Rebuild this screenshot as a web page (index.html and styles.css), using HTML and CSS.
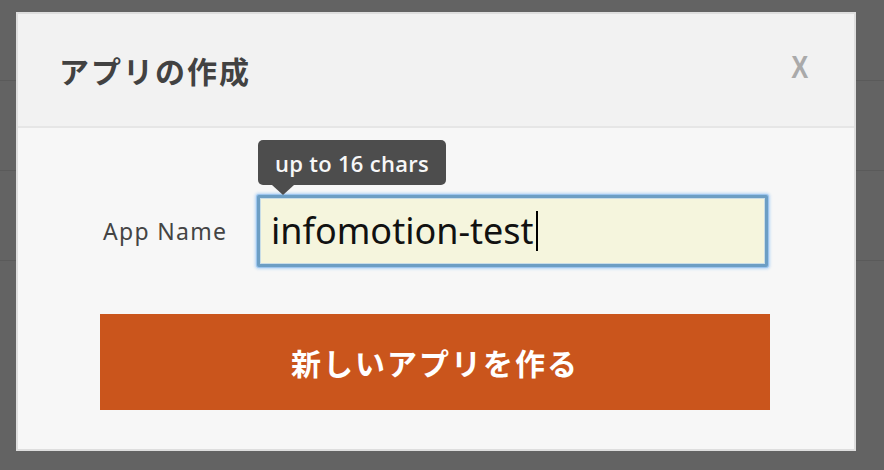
FILE: index.html
```html
<!DOCTYPE html>
<html lang="ja">
<head>
<meta charset="utf-8">
<title>アプリの作成</title>
<link rel="stylesheet" href="styles.css">
</head>
<body>
<div class="page">
  <div class="page-row first"></div>
  <div class="page-row"></div>
  <div class="page-row"></div>
</div>
<div class="modal">
  <div class="modal-header">
    <h1 class="modal-title">アプリの作成</h1>
    <span class="modal-close">X</span>
  </div>
  <div class="modal-body">
    <div class="form-row">
      <label class="form-label">App Name</label>
      <div class="field">
        <div class="tooltip">up to 16 chars</div>
        <div class="input"><span class="input-text">infomotion-test</span><span class="caret"></span></div>
      </div>
    </div>
    <button class="create-btn">新しいアプリを作る</button>
  </div>
</div>
</body>
</html>
```
FILE: styles.css
```css
html, body {
  margin: 0;
  padding: 0;
}
body {
  width: 884px;
  height: 470px;
  overflow: hidden;
  background: #636363;
  font-family: "Noto Sans", "Noto Sans CJK JP", sans-serif;
}
.page-row {
  height: 89px;
  border-bottom: 1px solid #5a5a5a;
}
.page-row.first {
  height: 80px;
}
.modal {
  position: fixed;
  left: 16px;
  top: 12px;
  width: 840px;
  height: 439px;
  box-sizing: border-box;
  border: 2px solid #dedede;
  background: #f7f7f7;
  display: flex;
  flex-direction: column;
}
.modal-header {
  height: 112px;
  background: #f2f2f2;
  border-bottom: 2px solid #e6e6e6;
  display: flex;
  align-items: center;
  justify-content: space-between;
  padding: 0 44px 0 41px;
}
.modal-title {
  margin: 0;
  font-family: "Noto Sans CJK JP", sans-serif;
  font-weight: 700;
  font-size: 30px;
  letter-spacing: 2px;
  color: #424242;
  line-height: 1;
}
.modal-close {
  font-family: "Liberation Sans", sans-serif;
  font-weight: 700;
  font-size: 32px;
  color: #aaaaaa;
  line-height: 1;
  transform: translateY(-3px) scaleX(0.8);
}
.modal-body {
  flex: 1;
  padding: 67px 84px 0 82px;
}
.form-row {
  display: flex;
  align-items: center;
}
.form-label {
  flex: 0 0 154px;
  padding-left: 3px;
  font-size: 23px;
  letter-spacing: 1.3px;
  color: #444444;
}
.field {
  position: relative;
  width: 511px;
}
.tooltip {
  position: absolute;
  left: 1px;
  top: -55px;
  width: 188px;
  height: 45px;
  box-sizing: border-box;
  border-radius: 5px;
  background: #4d4d4d;
  color: #f7f7f7;
  font-family: "Open Sans", "Noto Sans", sans-serif;
  font-weight: 600;
  font-size: 22px;
  letter-spacing: 0.3px;
  display: flex;
  align-items: center;
  justify-content: center;
}
.tooltip::after {
  content: "";
  position: absolute;
  left: 14px;
  top: 45px;
  border-left: 11px solid transparent;
  border-right: 11px solid transparent;
  border-top: 10px solid #4d4d4d;
}
.input {
  height: 72px;
  box-sizing: border-box;
  border: 3px solid #6c9ec4;
  border-radius: 2px;
  background: #f5f5dd;
  box-shadow: 0 0 0 1px #9cc5ee, 0 0 3px 2px #b6d6f5, inset 0 0 0 1px #c9dde6;
  display: flex;
  align-items: center;
  padding-left: 11px;
}
.input-text {
  font-size: 36px;
  color: #111111;
  line-height: 1;
}
.caret {
  display: inline-block;
  width: 2px;
  height: 40px;
  margin-left: 2px;
  background: #000000;
}
.create-btn {
  display: block;
  margin-top: 47px;
  width: 670px;
  height: 96px;
  border: none;
  padding: 0;
  background: #ca551c;
  color: #ffffff;
  font-family: "Noto Sans CJK JP", sans-serif;
  font-weight: 700;
  font-size: 30px;
  letter-spacing: 2px;
}
```
